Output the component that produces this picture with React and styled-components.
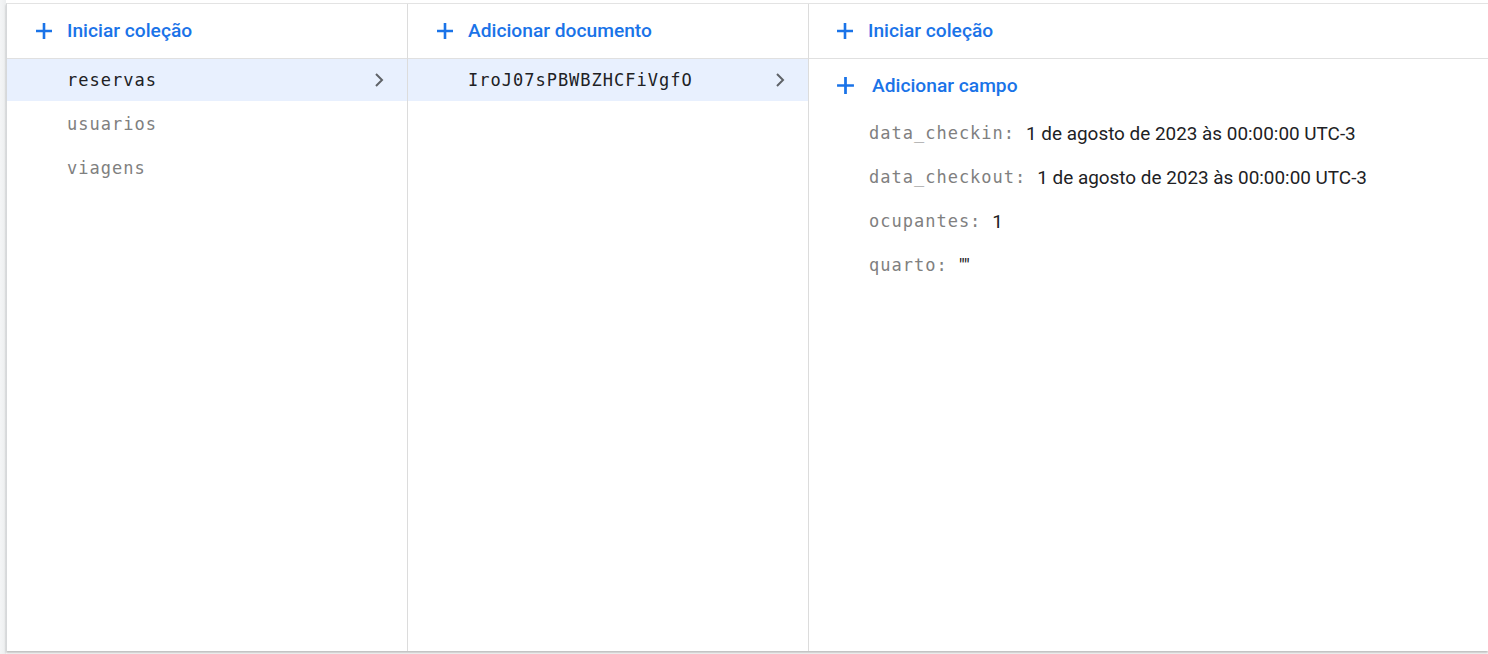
import React from "react";
import styled, { createGlobalStyle } from "styled-components";

const GlobalStyle = createGlobalStyle`
    html, body {
        margin: 0;
        padding: 0;
        background: #ffffff;
    }
`;

const Page = styled.div`
    display: flex;
    height: 654px;
    overflow: hidden;
`;

const Gutter = styled.div`
    width: 6px;
    background: linear-gradient(to right, #f4f5f6, #eceeef);
`;

const Card = styled.div`
    flex: 1;
    display: flex;
    margin-top: 3px;
    height: 648px;
    border-top: 1px solid #e3e3e3;
    border-left: 1px solid #d6d8da;
    box-shadow: 0 2px 2px rgba(0, 0, 0, 0.25);
    background: #fff;
    box-sizing: border-box;
`;

const Column = styled.div`
    width: ${p => (p.$grow ? "auto" : "401px")};
    flex: ${p => (p.$grow ? "1" : "none")};
    border-right: ${p => (p.$grow ? "none" : "1px solid #dcdcdc")};
    box-sizing: border-box;
    display: flex;
    flex-direction: column;
`;

const Header = styled.div`
    height: 53px;
    padding-bottom: 1px;
    flex: none;
    border-bottom: 1px solid #e0e0e0;
    display: flex;
    align-items: center;
    padding-left: ${p => p.$pad || 28}px;
    gap: 14px;
`;

const ActionText = styled.span`
    font-family: Roboto, "Liberation Sans", sans-serif;
    font-weight: 500;
    font-size: 19.2px;
    color: #1a73e8;
`;

const List = styled.div`
    display: flex;
    flex-direction: column;
`;

const Item = styled.div`
    height: 42px;
    margin-bottom: 2px;
    display: flex;
    align-items: center;
    justify-content: space-between;
    padding: 0 22px 0 60px;
    background: ${p => (p.$active ? "#e8f0fe" : "transparent")};
    font-family: "DejaVu Sans Mono", "Liberation Mono", monospace;
    font-size: 17px;
    letter-spacing: 1px;
    color: ${p => (p.$active ? "#202124" : "#808080")};
`;

const AddRow = styled.div`
    height: 53px;
    display: flex;
    align-items: center;
    padding-left: 27px;
    gap: 17px;
`;

const Field = styled.div`
    height: 44px;
    display: flex;
    align-items: center;
    padding-left: 60px;
    margin-top: ${p => (p.$first ? "-1px" : "0")};
`;

const Key = styled.span`
    font-family: "DejaVu Sans Mono", "Liberation Mono", monospace;
    font-size: 17px;
    letter-spacing: 1px;
    color: #808080;
`;

const Value = styled.span`
    margin-left: 11px;
    font-family: Roboto, "Liberation Sans", sans-serif;
    font-size: 18.9px;
    color: #202124;
`;

const Plus = ({ size = 18 }) => (
    <svg width={size} height={size} viewBox="0 0 18 18">
        <path d="M9 1v16M1 9h16" stroke="#1a73e8" strokeWidth="2.6" fill="none" />
    </svg>
);

const Chevron = () => (
    <svg width="12" height="16" viewBox="0 0 12 16">
        <path d="M3 2l6 6-6 6" stroke="#5f6368" strokeWidth="2" fill="none" />
    </svg>
);

const colecoes = ["reservas", "usuarios", "viagens"];

const campos = [
    ["data_checkin:", "1 de agosto de 2023 às 00:00:00 UTC-3"],
    ["data_checkout:", "1 de agosto de 2023 às 00:00:00 UTC-3"],
    ["ocupantes:", "1"],
    ["quarto:", "\"\""],
];

export default function App() {
    return (
        <>
            <GlobalStyle />
            <Page>
                <Gutter />
                <Card>
                    <Column>
                        <Header>
                            <Plus />
                            <ActionText>Iniciar coleção</ActionText>
                        </Header>
                        <List>
                            {colecoes.map((c, i) => (
                                <Item key={c} $active={i === 0}>
                                    {c}
                                    {i === 0 && <Chevron />}
                                </Item>
                            ))}
                        </List>
                    </Column>
                    <Column>
                        <Header>
                            <Plus />
                            <ActionText>Adicionar documento</ActionText>
                        </Header>
                        <List>
                            <Item $active>
                                IroJ07sPBWBZHCFiVgfO
                                <Chevron />
                            </Item>
                        </List>
                    </Column>
                    <Column $grow>
                        <Header $pad={27}>
                            <Plus />
                            <ActionText>Iniciar coleção</ActionText>
                        </Header>
                        <AddRow>
                            <Plus size={19} />
                            <ActionText>Adicionar campo</ActionText>
                        </AddRow>
                        {campos.map(([k, v], i) => (
                            <Field key={k} $first={i === 0}>
                                <Key>{k}</Key>
                                <Value>{v}</Value>
                            </Field>
                        ))}
                    </Column>
                </Card>
            </Page>
        </>
    );
}
